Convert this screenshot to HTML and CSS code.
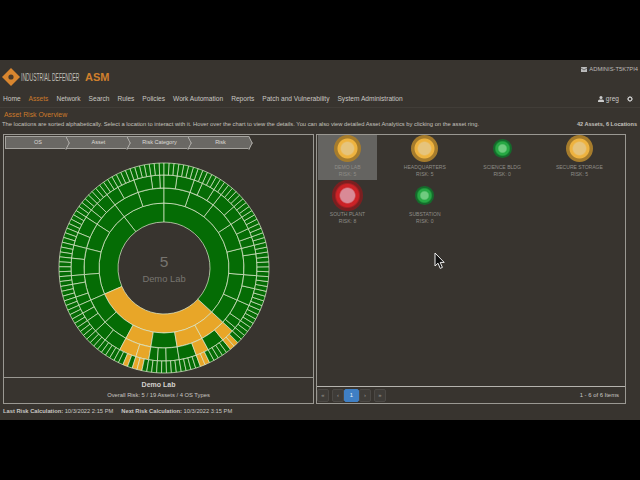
FILE: index.html
```html
<!DOCTYPE html>
<html lang="en">
<head>
    <meta charset="UTF-8">
    <title>Industrial Defender ASM</title>
    <link rel="stylesheet" href="styles.css">
</head>
<body>
    <div class="letterbox"></div>
    <div class="app">
        <header class="top-bar">
            <div class="logo">
                <svg class="logo-mark" width="18" height="18" viewBox="0 0 18 18">
                    <path d="M9 0 18 9 9 18 0 9Z" fill="#d9862f"/>
                    <circle cx="9" cy="9" r="2.6" fill="#4a3a2a"/>
                </svg>
                <span class="logo-name"><span>INDUSTRIAL DEFENDER</span></span>
                <span class="logo-asm">ASM</span>
            </div>
            <div class="host">
                <svg width="6" height="5" viewBox="0 0 6 5"><path d="M0 0H6V5H0Z" fill="#bbb"/><path d="M0 1 3 3 6 1" stroke="#333" stroke-width=".6" fill="none"/></svg>
                ADMINIS-T5K7PI4
            </div>
        </header>

        <nav class="main-nav">
            <a>Home</a>
            <a class="active">Assets</a>
            <a>Network</a>
            <a>Search</a>
            <a>Rules</a>
            <a>Policies</a>
            <a>Work Automation</a>
            <a>Reports</a>
            <a>Patch and Vulnerability</a>
            <a>System Administration</a>
            <div class="user-menu">
                <svg width="6" height="6" viewBox="0 0 7 7"><circle cx="3.5" cy="1.8" r="1.8" fill="#ccc"/><path d="M0 7V5.6C0 4.6 1.5 4 3.5 4S7 4.6 7 5.6V7Z" fill="#ccc"/></svg>
                <span>greg</span>
                <svg class="gear" width="6" height="6" viewBox="0 0 7 7"><circle cx="3.5" cy="3.5" r="2.2" fill="none" stroke="#ccc" stroke-width="1.4"/><path d="M3.5 0V7M0 3.5H7M1 1 6 6M6 1 1 6" stroke="#ccc" stroke-width=".9" stroke-dasharray="1 5"/></svg>
            </div>
        </nav>

        <main class="content">
            <h1 class="page-title">Asset Risk Overview</h1>
            <div class="page-info">
                <p>The locations are sorted alphabetically. Select a location to interact with it. Hover over the chart to view the details. You can also view detailed Asset Analytics by clicking on the asset ring.</p>
                <strong>42 Assets, 6 Locations</strong>
            </div>

            <div class="panels">
                <section class="panel chart-panel">
                    <div class="crumbs">
                        <span class="crumb">OS</span>
                        <span class="crumb">Asset</span>
                        <span class="crumb">Risk Category</span>
                        <span class="crumb">Risk</span>
                    </div>
                    <div class="chart-wrap">
                        <svg id="sunburst" width="212" height="212" viewBox="-106 -106 212 212">
                            <text class="chart-num" x="0" y="-1">5</text>
                            <text class="chart-name" x="0" y="14">Demo Lab</text>
                        </svg>
                    </div>
                    <div class="chart-foot">
                        <strong>Demo Lab</strong>
                        <span>Overall Risk: 5 / 19 Assets / 4 OS Types</span>
                    </div>
                </section>

                <section class="panel list-panel">
                    <div class="locations">
                        <div class="location selected"><i class="ring amber"></i><b>DEMO LAB</b><b>RISK: 5</b></div>
                        <div class="location"><i class="ring amber"></i><b>HEADQUARTERS</b><b>RISK: 5</b></div>
                        <div class="location"><i class="ring green"></i><b>SCIENCE BLDG</b><b>RISK: 0</b></div>
                        <div class="location"><i class="ring amber"></i><b>SECURE STORAGE</b><b>RISK: 5</b></div>
                        <div class="location"><i class="ring red"></i><b>SOUTH PLANT</b><b>RISK: 8</b></div>
                        <div class="location"><i class="ring green"></i><b>SUBSTATION</b><b>RISK: 0</b></div>
                    </div>
                    <div class="pager">
                        <div class="pages">
                            <span class="first">&laquo;</span><span>&lsaquo;</span><span class="current">1</span><span>&rsaquo;</span><span class="last">&raquo;</span>
                        </div>
                        <em>1 - 6 of 6 Items</em>
                    </div>
                </section>
            </div>

            <div class="calc-line">
                <span><strong>Last Risk Calculation:</strong> 10/3/2022 2:15 PM</span>
                <span><strong>Next Risk Calculation:</strong> 10/3/2022 3:15 PM</span>
            </div>
        </main>

        <svg class="cursor" width="12" height="18" viewBox="0 0 12 18">
            <path d="M1 1V14L4 11.2 6.2 16.4 8.4 15.4 6.2 10.4H10.2Z" fill="#111" stroke="#eee" stroke-width="1"/>
        </svg>
    </div>
    <div class="letterbox"></div>
    <script src="chart.js"></script>
</body>
</html>
```

FILE: styles.css
```css
* {
    box-sizing: border-box;
}

body {
    margin: 0;
    background-color: #000;
    font-family: "Liberation Sans", Arial, sans-serif;
    color: #c9c7c3;
    overflow: hidden;
}

.letterbox {
    height: 60px;
}

.app {
    position: relative;
    height: 360px;
    background-color: #38342f;
    display: flex;
    flex-direction: column;
}

.top-bar {
    height: 30px;
    padding: 8px 2px 0 2px;
    display: flex;
    justify-content: space-between;
    align-items: flex-start;
}

.logo {
    display: flex;
    align-items: center;
    height: 18px;
}

.logo-name {
    width: 58px;
    margin-left: 1px;
    white-space: nowrap;
    font-size: 10px;
    color: #c2c0bc;
}

.logo-name span {
    display: inline-block;
    transform: scaleX(0.5);
    transform-origin: left center;
}

.logo-asm {
    font-size: 11px;
    font-weight: bold;
    color: #d07f2c;
    margin-left: 6px;
}

.host {
    font-size: 5.8px;
    color: #bdbbb7;
    display: flex;
    align-items: center;
    gap: 2px;
    margin-top: -2px;
}

.main-nav {
    height: 18px;
    padding: 0 7px 0 3px;
    display: flex;
    align-items: center;
    gap: 8px;
    font-size: 6.6px;
    border-bottom: 1px solid #413d38;
}

.main-nav .active {
    color: #cc7a2b;
}

.user-menu {
    margin-left: auto;
    display: flex;
    align-items: center;
    gap: 2px;
}

.gear {
    margin-left: 6px;
}

.content {
    flex: 1;
    display: flex;
    flex-direction: column;
    padding: 1px 0 0 3px;
}

.page-title {
    margin: 0;
    font-size: 6.9px;
    font-weight: normal;
    color: #cc7a2b;
    line-height: 11px;
    padding-left: 1px;
}

.page-info {
    display: flex;
    justify-content: space-between;
    font-size: 5.8px;
    line-height: 9px;
    height: 14px;
    padding-right: 3px;
    color: #c4c2be;
}

.page-info p {
    margin: 0 0 0 -1px;
}

.page-info strong {
    font-size: 5.6px;
}

.panels {
    display: flex;
    gap: 2px;
    height: 270px;
}

.panel {
    border: 1px solid #9a9892;
    display: flex;
    flex-direction: column;
}

.chart-panel {
    width: 311px;
}

.list-panel {
    width: 310px;
}

.crumbs {
    display: flex;
    margin: 1px 0 0 1px;
    height: 13px;
}

.crumb {
    position: relative;
    width: 61px;
    padding-left: 4px;
    background-color: #6a6864;
    border-top: 1px solid #a5a39e;
    border-bottom: 1px solid #a5a39e;
    color: #dcdad6;
    font-size: 5.5px;
    line-height: 11px;
    text-align: center;
}

.crumb:first-child {
    border-left: 1px solid #a5a39e;
}

.crumb::after {
    content: "";
    position: absolute;
    z-index: 1;
    top: 1px;
    right: -5px;
    width: 9px;
    height: 9px;
    background-color: #6a6864;
    border-top: 1px solid #c8c6c1;
    border-right: 1px solid #c8c6c1;
    transform: scaleX(0.5) rotate(45deg);
}

.chart-wrap {
    flex: 1;
    display: flex;
    justify-content: center;
    align-items: center;
    padding-left: 10px;
    padding-top: 9px;
}

.chart-num {
    font-size: 15.5px;
    fill: #77746f;
    text-anchor: middle;
}

.chart-name {
    font-size: 9.4px;
    fill: #77746f;
    text-anchor: middle;
}

.chart-foot {
    height: 26px;
    border-top: 1px solid #9a9892;
    display: flex;
    flex-direction: column;
    align-items: center;
    font-size: 5.8px;
    padding-top: 3px;
    gap: 4px;
}

.chart-foot strong {
    font-size: 7px;
    color: #d4d2ce;
}

.locations {
    flex: 1;
    display: grid;
    grid-template-columns: repeat(4, 59px);
    grid-auto-rows: 47px;
    column-gap: 18.3px;
    align-content: start;
    padding-left: 1px;
}

.location {
    height: 45px;
    display: flex;
    flex-direction: column;
    align-items: center;
    font-size: 5.05px;
    line-height: 7px;
    color: #8f8d88;
}

.location b {
    font-weight: normal;
    white-space: nowrap;
}

.location.selected {
    background-color: #656461;
}

.ring {
    flex: none;
    width: 27px;
    height: 27px;
    margin-bottom: 2px;
    border-radius: 50%;
}

.ring.amber {
    background: radial-gradient(circle, #e6c47c 0 6px, #eeb33f 7.5px 9.5px, #a67c2c 10.5px);
}

.ring.green {
    width: 19px;
    height: 19px;
    margin-top: 4px;
    margin-bottom: 6px;
    background: radial-gradient(circle, #6fcb7f 0 3.5px, #27a844 5px 6.5px, #146b2b 8px);
}

.ring.red {
    width: 31px;
    height: 31px;
    margin-top: -2px;
    margin-bottom: 0;
    background: radial-gradient(circle, #d98a96 0 7px, #cc2226 8.5px 11px, #7a1f20 13px);
}

.pager {
    height: 17px;
    border-top: 1px solid #b5b3ae;
    display: flex;
    justify-content: space-between;
    align-items: center;
    padding-right: 6px;
    font-size: 5.9px;
}

.pager em {
    font-style: normal;
}

.pages {
    display: flex;
}

.pages span {
    width: 12px;
    height: 13px;
    line-height: 11px;
    text-align: center;
    background-color: #3f3c38;
    border: 1px solid #4c4945;
    border-radius: 2px;
    color: #9a9892;
}

.pages .first {
    margin-right: 3px;
}

.pages .last {
    margin-left: 3px;
}

.pages .current {
    width: 15px;
    background-color: #3f7fc4;
    border-color: #3f7fc4;
    color: #e4eef8;
}

.calc-line {
    display: flex;
    gap: 8px;
    font-size: 5.75px;
    padding-top: 4px;
}

.cursor {
    position: absolute;
    left: 434px;
    top: 192px;
}
```

FILE: chart.js
```js
// sunburst for the selected location: OS > asset > risk category > risk
const GREEN = '#056c05';
const ORANGE = '#e8a628';
const RINGS = [[46, 65], [65, 80], [80, 93], [93, 105]];

// one list per OS, each asset is "category|category", one letter per risk
const data = [
    ['ggg|gggg', 'gg|ggg|gg', 'gggg|ggg', 'ggg|gg|gg', 'gg|ggggg', 'ggg|gggg', 'gggg|gg|g'],
    ['goo|gggg', 'goo|gggg', 'ggg|gg|gg', 'goo|gogg', 'gggg|ggg', 'ggg|gg|gg'],
    ['gg|ggg|gg', 'gggg|ggg', 'ggg|gggg', 'gg|gg|ggg'],
    ['ggg|gggg', 'gggg|gg|g']
];

const svg = document.getElementById('sunburst');
const assetStep = 360 / 19;

function point(r, deg) {
    const a = deg * Math.PI / 180;
    return (r * Math.sin(a)).toFixed(2) + ' ' + (-r * Math.cos(a)).toFixed(2);
}

function addArc(ring, from, to, hot) {
    const [r0, r1] = RINGS[ring];
    const large = to - from > 180 ? 1 : 0;
    const d = 'M' + point(r0, from) + 'A' + r0 + ' ' + r0 + ' 0 ' + large + ' 1 ' + point(r0, to) +
        'L' + point(r1, to) + 'A' + r1 + ' ' + r1 + ' 0 ' + large + ' 0 ' + point(r1, from) + 'Z';
    const path = document.createElementNS('http://www.w3.org/2000/svg', 'path');
    path.setAttribute('d', d);
    path.setAttribute('fill', hot ? ORANGE : GREEN);
    path.setAttribute('stroke', '#dfeccf');
    path.setAttribute('stroke-width', '0.7');
    svg.insertBefore(path, svg.firstChild);
}

let angle = 0;
data.forEach(function (os) {
    const osStart = angle;
    os.forEach(function (asset) {
        const cats = asset.split('|');
        const leafStep = assetStep / asset.replace(/\|/g, '').length;
        let at = angle;
        cats.forEach(function (cat) {
            const catStart = at;
            for (const leaf of cat) {
                addArc(3, at, at + leafStep, leaf === 'o');
                at += leafStep;
            }
            addArc(2, catStart, at, cat.includes('o'));
        });
        addArc(1, angle, angle + assetStep, asset.includes('o'));
        angle += assetStep;
    });
    addArc(0, osStart, angle, os.join('').includes('o'));
});
```
